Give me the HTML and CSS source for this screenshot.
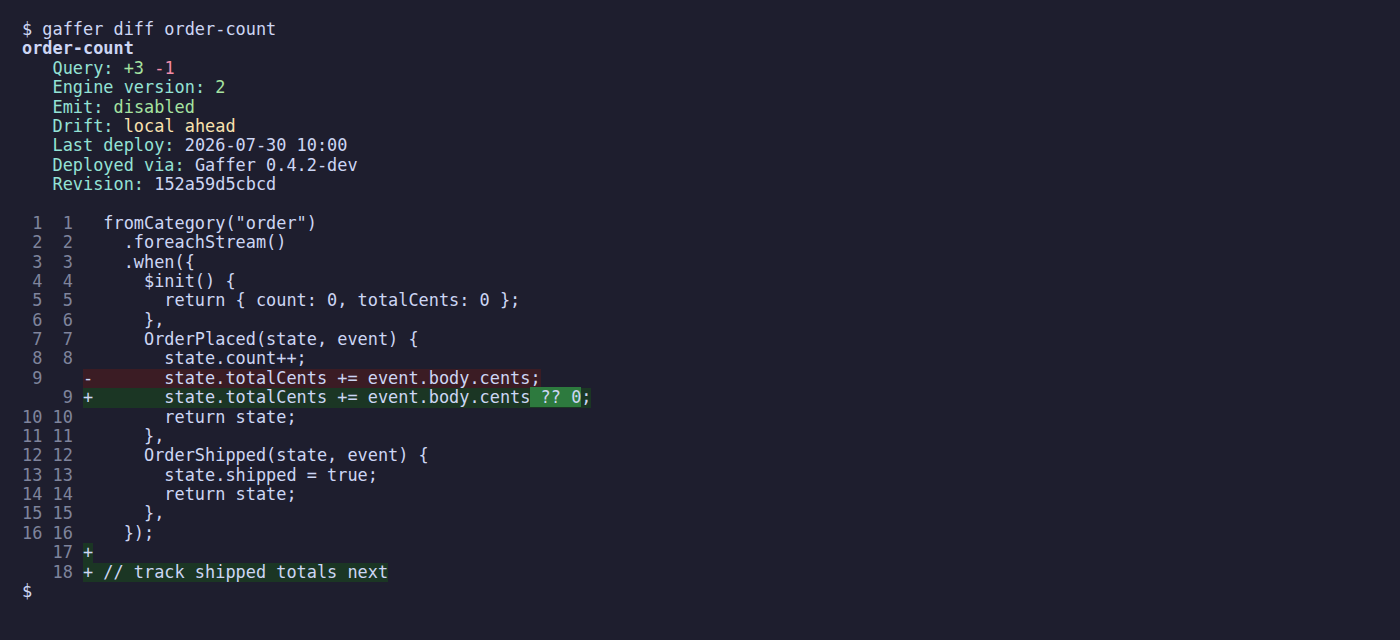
FILE: index.html
```html
<!DOCTYPE html>
<html>
<head>
<meta charset="utf-8">
<link rel="stylesheet" href="styles.css">
</head>
<body>
<div class="term">
<div class="line">$ gaffer diff order-count</div>
<div class="line bold">order-count</div>
<div class="line">   <span class="k">Query:</span> <span class="g">+3</span> <span class="r">-1</span></div>
<div class="line">   <span class="k">Engine version:</span> <span class="g">2</span></div>
<div class="line">   <span class="k">Emit:</span> <span class="g">disabled</span></div>
<div class="line">   <span class="k">Drift:</span> <span class="y">local ahead</span></div>
<div class="line">   <span class="k">Last deploy:</span> 2026-07-30 10:00</div>
<div class="line">   <span class="k">Deployed via:</span> Gaffer 0.4.2-dev</div>
<div class="line">   <span class="k">Revision:</span> 152a59d5cbcd</div>
<div class="line"> </div>
<div class="row"><span class="ln"> 1  1 </span><span class="code">  fromCategory("order")</span></div>
<div class="row"><span class="ln"> 2  2 </span><span class="code">    .foreachStream()</span></div>
<div class="row"><span class="ln"> 3  3 </span><span class="code">    .when({</span></div>
<div class="row"><span class="ln"> 4  4 </span><span class="code">      $init() {</span></div>
<div class="row"><span class="ln"> 5  5 </span><span class="code">        return { count: 0, totalCents: 0 };</span></div>
<div class="row"><span class="ln"> 6  6 </span><span class="code">      },</span></div>
<div class="row"><span class="ln"> 7  7 </span><span class="code">      OrderPlaced(state, event) {</span></div>
<div class="row"><span class="ln"> 8  8 </span><span class="code">        state.count++;</span></div>
<div class="row"><span class="ln"> 9    </span><span class="code del">-       state.totalCents += event.body.cents;</span></div>
<div class="row"><span class="ln">    9 </span><span class="code add">+       state.totalCents += event.body.cents<span class="hl"> ?? 0</span>;</span></div>
<div class="row"><span class="ln">10 10 </span><span class="code">        return state;</span></div>
<div class="row"><span class="ln">11 11 </span><span class="code">      },</span></div>
<div class="row"><span class="ln">12 12 </span><span class="code">      OrderShipped(state, event) {</span></div>
<div class="row"><span class="ln">13 13 </span><span class="code">        state.shipped = true;</span></div>
<div class="row"><span class="ln">14 14 </span><span class="code">        return state;</span></div>
<div class="row"><span class="ln">15 15 </span><span class="code">      },</span></div>
<div class="row"><span class="ln">16 16 </span><span class="code">    });</span></div>
<div class="row"><span class="ln">   17 </span><span class="code add">+</span></div>
<div class="row"><span class="ln">   18 </span><span class="code add">+ // track shipped totals next</span></div>
<div class="line">$</div>
</div>
</body>
</html>
```

FILE: styles.css
```css
html, body {
  margin: 0;
  padding: 0;
  background: #1e1e2e;
  height: 100%;
}
.term {
  padding: 20px 22px;
  font-family: "DejaVu Sans Mono", monospace;
  font-size: 16.9px;
  line-height: 19.38px;
  color: #cdd6f4;
}
.line, .row {
  white-space: pre;
  height: 19.38px;
}
.row {
  display: flex;
}
.bold { font-weight: bold; }
.k { color: #94e2d5; }
.g { color: #a6e3a1; }
.r { color: #f38ba8; }
.y { color: #f9e2af; }
.ln { color: #7f849c; }
.code { display: inline-block; white-space: pre; }
.code.del { background: #3b1c24; }
.code.add { background: #1b3624; }
.hl { background: #2d7a3e; }
```
